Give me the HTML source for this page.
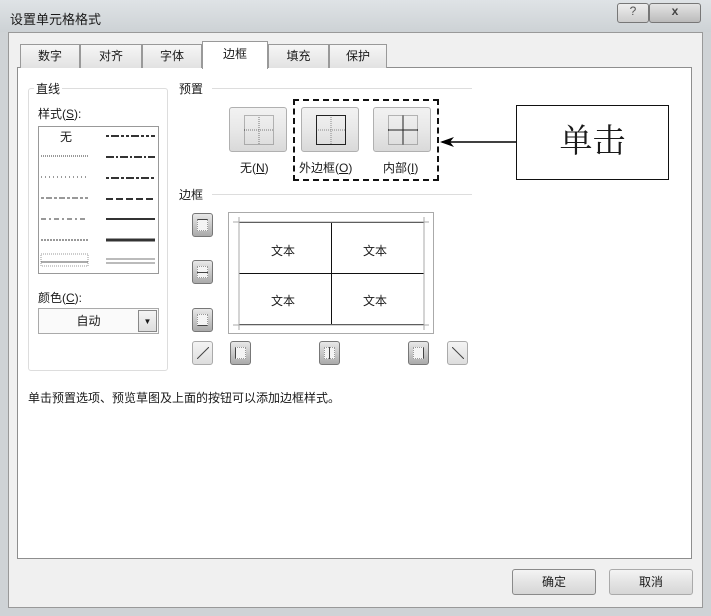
<!DOCTYPE html>
<html><head><meta charset="utf-8"><style>
*{box-sizing:border-box;margin:0;padding:0}
body{width:711px;height:616px;position:relative;overflow:hidden;background:#cfd3d6;font-family:"Liberation Sans","Noto Sans CJK SC",sans-serif;font-size:12px;color:#1a1a1a}
.a{position:absolute}
.btn{position:absolute;border:1px solid #8a8a8a;border-radius:3px;background:linear-gradient(#f4f4f4,#e4e4e4 50%,#d6d6d6);text-align:center}
.pb{position:absolute;width:58px;height:45px;border:1px solid #b0b0b0;border-radius:3px;background:linear-gradient(#f2f2f2,#e8e8e8 50%,#d9d9d9)}
.pb svg{position:absolute;left:14px;top:7px}
.sb{position:absolute;width:21px;height:24px;border:1px solid #777;border-radius:3px;background:linear-gradient(#e8e8e8,#aaa)}
.sb i{position:absolute;left:4px;top:5px;width:11px;height:12px;border:1px dotted #999;background:#f4f4f4}
.ln{position:absolute;height:0}
</style></head><body>
<div class="a" style="left:0;top:0;width:711px;height:32px;background:linear-gradient(#dfe3e6,#cdd2d5)"></div>
<div class="a" style="left:10px;top:9px;font-size:13px">设置单元格格式</div>
<div class="a" style="left:617px;top:3px;width:32px;height:20px;border:1px solid #777;border-radius:3px;background:linear-gradient(#eee,#ccc);text-align:center;font-size:12px;color:#555">?</div>
<div class="a" style="left:649px;top:3px;width:52px;height:20px;border:1px solid #777;border-radius:3px;background:linear-gradient(#e4e4e4,#bbb);text-align:center;font-weight:bold;color:#444">x</div>
<div class="a" style="left:8px;top:32px;width:695px;height:576px;background:#f0f0f0;border:1px solid #999"></div>
<div class="a" style="left:17px;top:67px;width:675px;height:492px;background:#fff;border:1px solid #8e8e8e"></div>
<div class="a" style="left:20px;top:44px;width:60px;height:24px;border:1px solid #999;border-bottom:none;background:linear-gradient(#f6f6f6,#e2e2e2);text-align:center;line-height:22px">数字</div>
<div class="a" style="left:80px;top:44px;width:62px;height:24px;border:1px solid #999;border-bottom:none;background:linear-gradient(#f6f6f6,#e2e2e2);text-align:center;line-height:22px">对齐</div>
<div class="a" style="left:142px;top:44px;width:60px;height:24px;border:1px solid #999;border-bottom:none;background:linear-gradient(#f6f6f6,#e2e2e2);text-align:center;line-height:22px">字体</div>
<div class="a" style="left:202px;top:41px;width:66px;height:28px;border:1px solid #999;border-bottom:none;background:#fff;text-align:center;line-height:24px">边框</div>
<div class="a" style="left:268px;top:44px;width:61px;height:24px;border:1px solid #999;border-bottom:none;background:linear-gradient(#f6f6f6,#e2e2e2);text-align:center;line-height:22px">填充</div>
<div class="a" style="left:329px;top:44px;width:58px;height:24px;border:1px solid #999;border-bottom:none;background:linear-gradient(#f6f6f6,#e2e2e2);text-align:center;line-height:22px">保护</div>

<div class="a" style="left:28px;top:88px;width:140px;height:283px;border:1px solid #ddd;border-radius:3px"></div>
<div class="a" style="left:34px;top:80px;background:#fff;padding:0 2px">直线</div>
<div class="a" style="left:38px;top:105px">样式(<u>S</u>):</div>
<div class="a" style="left:38px;top:126px;width:121px;height:148px;border:1px solid #999"></div>
<div class="a" style="left:60px;top:128px">无</div>
<svg class="a" style="left:38px;top:126px" width="121" height="148">
<g stroke="#333" fill="none">
<line x1="3" y1="30" x2="50" y2="30" stroke-dasharray="1 1"/>
<line x1="3" y1="51" x2="50" y2="51" stroke-dasharray="1 3"/>
<line x1="3" y1="72" x2="50" y2="72" stroke-dasharray="3 2 6 2"/>
<line x1="3" y1="93" x2="50" y2="93" stroke-dasharray="5 3 2 3"/>
<line x1="3" y1="114" x2="50" y2="114" stroke-dasharray="2 1"/>
<rect x="3" y="128" width="47" height="12" stroke="#999" stroke-dasharray="1 1"/>
<line x1="3" y1="136" x2="50" y2="136" stroke="#555"/>
<g stroke-width="2"><line x1="68" y1="10" x2="117" y2="10" stroke-dasharray="3 2 8 2 3 2"/>
<line x1="68" y1="31" x2="117" y2="31" stroke-dasharray="8 2 2 2"/>
<line x1="68" y1="52" x2="117" y2="52" stroke-dasharray="3 2 8 2"/>
<line x1="68" y1="73" x2="117" y2="73" stroke-dasharray="7 3"/>
<line x1="68" y1="93" x2="117" y2="93"/></g>
<line x1="68" y1="114" x2="117" y2="114" stroke-width="3"/>
<line x1="68" y1="133" x2="117" y2="133" stroke="#777"/><line x1="68" y1="137" x2="117" y2="137" stroke="#777"/>
</g></svg>
<div class="a" style="left:38px;top:289px">颜色(<u>C</u>):</div>
<div class="a" style="left:38px;top:308px;width:121px;height:26px;border:1px solid #aaa;background:#fafafa;text-align:center;line-height:24px;padding-right:20px">自动</div>
<div class="a" style="left:138px;top:310px;width:19px;height:22px;border:1px solid #888;background:linear-gradient(#f4f4f4,#ddd);text-align:center;font-size:8px;line-height:22px">▼</div>

<div class="a" style="left:179px;top:80px">预置</div>
<div class="ln" style="left:212px;top:88px;width:260px;border-top:1px solid #ddd"></div>
<div class="pb" style="left:229px;top:107px"><svg width="30" height="30"><g fill="none" stroke="#777" stroke-dasharray="1 1"><rect x="0.5" y="0.5" width="29" height="29"/><line x1="15" y1="0" x2="15" y2="30"/><line x1="0" y1="15" x2="30" y2="15"/></g></svg></div>
<div class="pb" style="left:301px;top:107px"><svg width="30" height="30"><g fill="none" stroke="#888" stroke-dasharray="1 1"><line x1="15" y1="0" x2="15" y2="30"/><line x1="0" y1="15" x2="30" y2="15"/></g><rect x="0.5" y="0.5" width="29" height="29" fill="none" stroke="#222"/></svg></div>
<div class="pb" style="left:373px;top:107px"><svg width="30" height="30"><rect x="0.5" y="0.5" width="29" height="29" fill="none" stroke="#777" stroke-dasharray="1 1"/><g stroke="#222"><line x1="15" y1="0" x2="15" y2="30"/><line x1="0" y1="15" x2="30" y2="15"/></g></svg></div>
<div class="a" style="left:240px;top:159px">无(<u>N</u>)</div>
<div class="a" style="left:299px;top:159px">外边框(<u>O</u>)</div>
<div class="a" style="left:383px;top:159px">内部(<u>I</u>)</div>
<div class="a" style="left:293px;top:99px;width:146px;height:82px;border:2px dashed #111"></div>
<svg class="a" style="left:438px;top:132px" width="80" height="20"><line x1="4" y1="10" x2="78" y2="10" stroke="#000" stroke-width="1.5"/><path d="M2 10 L16 5 L12 10 L16 15Z" fill="#000"/></svg>
<div class="a" style="left:516px;top:105px;width:153px;height:75px;border:1.5px solid #111;background:#fff;font-family:'Liberation Serif','Noto Serif CJK SC',serif;font-size:33px;text-align:center;line-height:72px">单击</div>

<div class="a" style="left:179px;top:186px">边框</div>
<div class="ln" style="left:212px;top:194px;width:260px;border-top:1px solid #ddd"></div>
<div class="a" style="left:228px;top:212px;width:206px;height:122px;border:1px solid #aaa"></div>
<svg class="a" style="left:228px;top:212px" width="206" height="122"><g stroke="#111"><rect x="11" y="10.5" width="185" height="102" fill="none"/><line x1="103.5" y1="10" x2="103.5" y2="113"/><line x1="11" y1="61.5" x2="196" y2="61.5"/></g>
<g stroke="#aaa"><line x1="11" y1="5" x2="11" y2="118"/><line x1="196" y1="5" x2="196" y2="118"/><line x1="5" y1="10" x2="201" y2="10"/><line x1="5" y1="113" x2="201" y2="113"/></g></svg>
<div class="a" style="left:271px;top:242px">文本</div><div class="a" style="left:363px;top:242px">文本</div>
<div class="a" style="left:271px;top:292px">文本</div><div class="a" style="left:363px;top:292px">文本</div>
<div class="sb" style="left:192px;top:213px"><i style="border-top:1px solid #444"></i></div>
<div class="sb" style="left:192px;top:260px"><i style="background:linear-gradient(#f4f4f4 5px,#444 5px,#444 6px,#f4f4f4 6px)"></i></div>
<div class="sb" style="left:192px;top:308px"><i style="border-bottom:1px solid #444"></i></div>
<div class="sb" style="left:192px;top:341px;background:linear-gradient(#f4f4f4,#ddd);border-color:#aaa"><svg class="a" style="left:4px;top:5px" width="12" height="12"><line x1="0" y1="12" x2="12" y2="0" stroke="#444"/></svg></div>
<div class="sb" style="left:230px;top:341px"><i style="border-left:1px solid #444"></i></div>
<div class="sb" style="left:319px;top:341px"><i style="background:linear-gradient(90deg,#f4f4f4 4px,#444 4px,#444 5px,#f4f4f4 5px)"></i></div>
<div class="sb" style="left:408px;top:341px"><i style="border-right:1px solid #444"></i></div>
<div class="sb" style="left:447px;top:341px;background:linear-gradient(#f4f4f4,#ddd);border-color:#aaa"><svg class="a" style="left:4px;top:5px" width="12" height="12"><line x1="0" y1="0" x2="12" y2="12" stroke="#444"/></svg></div>

<div class="a" style="left:28px;top:389px">单击预置选项、预览草图及上面的按钮可以添加边框样式。</div>
<div class="btn" style="left:512px;top:569px;width:84px;height:26px;line-height:24px">确定</div>
<div class="btn" style="left:609px;top:569px;width:84px;height:26px;line-height:24px;border-color:#aaa">取消</div>
</body></html>
